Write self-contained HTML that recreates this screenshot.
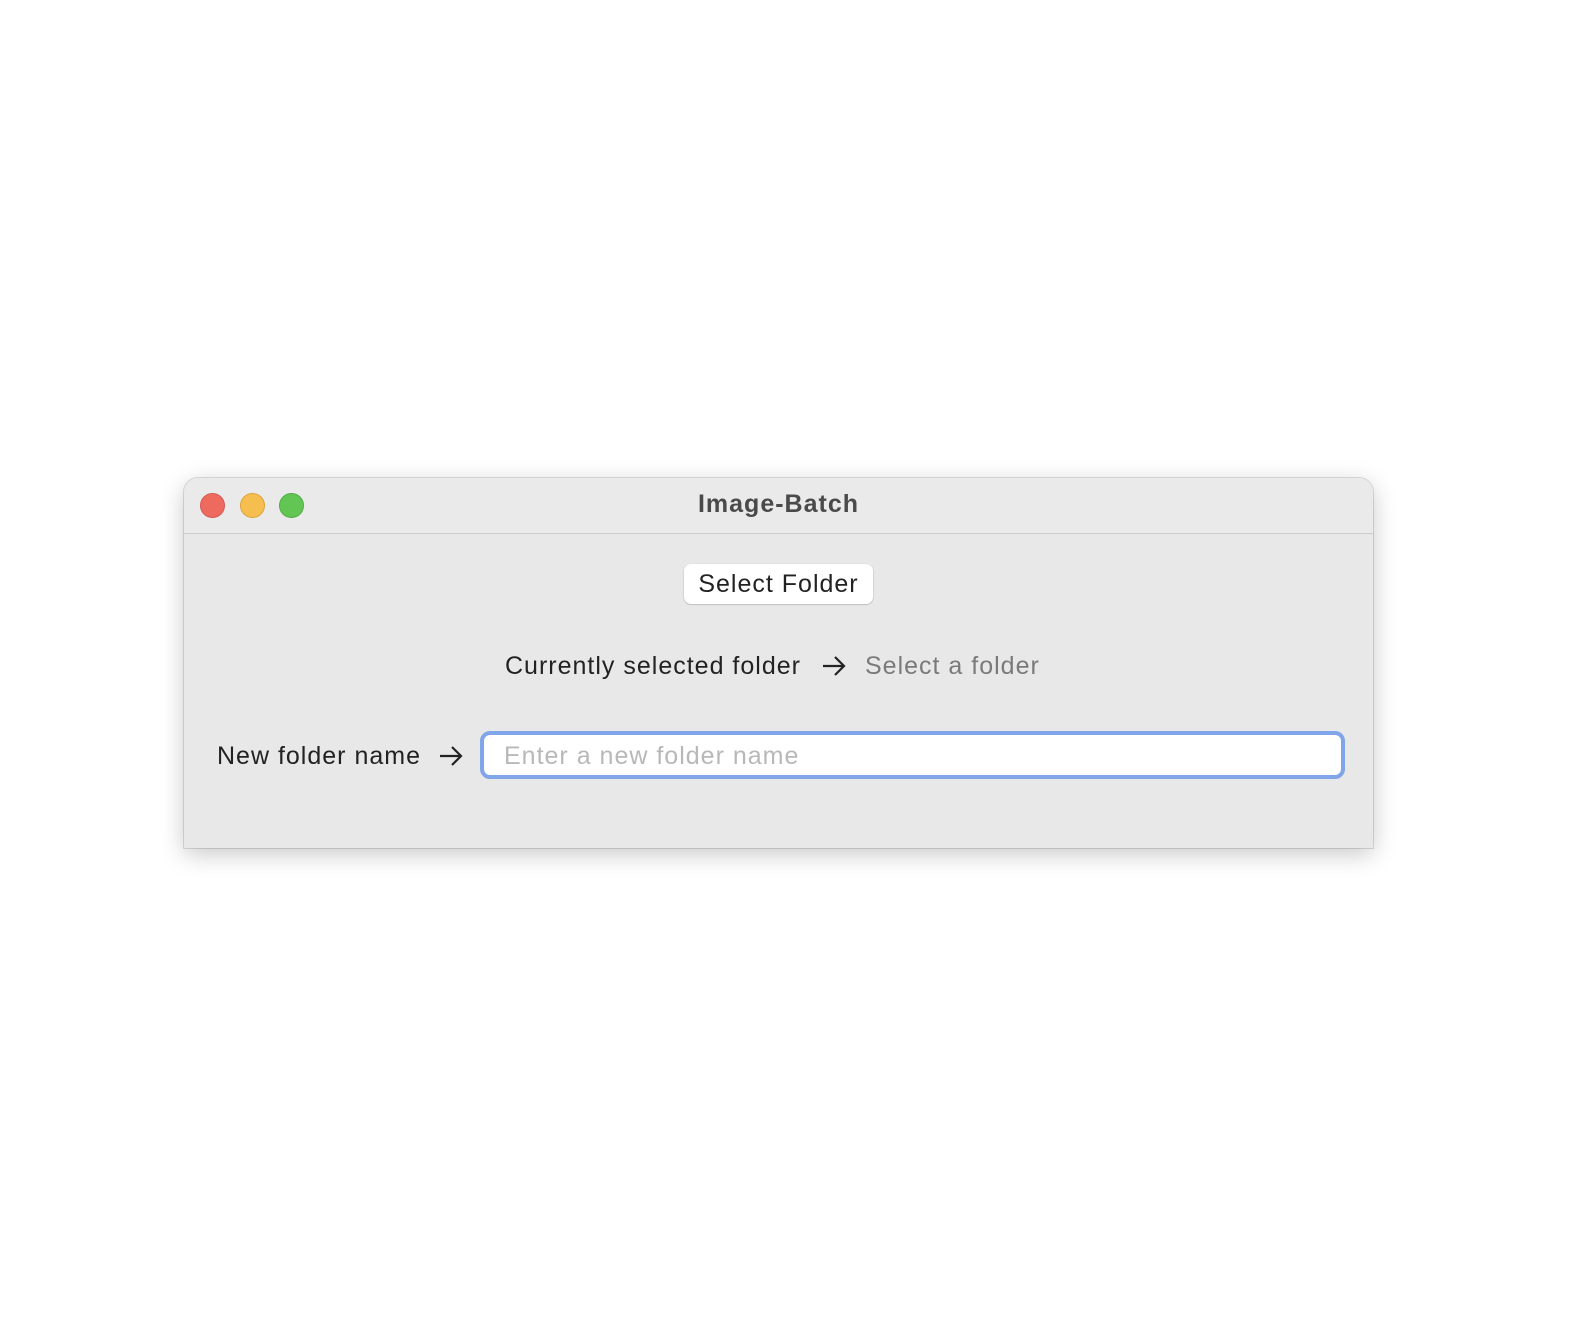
<!DOCTYPE html>
<html><head><meta charset="utf-8"><style>
html,body{margin:0;padding:0;background:#fff;width:1582px;height:1331px;overflow:hidden;font-family:"Liberation Sans",sans-serif;}
.win{position:absolute;left:184px;top:478px;width:1189px;height:370px;background:#e8e8e8;border-radius:14px 14px 0 0;box-shadow:0 0 0 1px rgba(0,0,0,0.12),0 6px 24px rgba(0,0,0,0.22);overflow:hidden;}
.tb{position:absolute;left:0;top:0;width:100%;height:55px;background:#eaeaea;border-bottom:1px solid #cdcdcd;}
.dot{position:absolute;top:15px;width:23px;height:23px;border-radius:50%;}
.t{position:absolute;white-space:nowrap;font-size:25px;letter-spacing:1px;color:#222;line-height:28px;}
.arrow{position:absolute;}
</style></head><body>
<div class="win">
 <div class="tb">
  <div class="dot" style="left:16px;background:#ee6a5f;border:0.5px solid #d45a50"></div>
  <div class="dot" style="left:56px;background:#f6be4f;border:0.5px solid #dca43d"></div>
  <div class="dot" style="left:95px;background:#62c554;border:0.5px solid #50ad45"></div>
  <div class="t" style="left:0;width:1189px;text-align:center;top:12px;font-weight:bold;color:#4a4a4a;">Image-Batch</div>
 </div>
 <div style="position:absolute;left:500px;top:86px;width:189px;height:40px;background:#fff;border-radius:7px;box-shadow:0 0.5px 1.5px rgba(0,0,0,0.3);"></div>
 <div class="t" style="left:500px;width:189px;text-align:center;top:92px;">Select Folder</div>
 <div class="t" style="left:321px;top:174px;">Currently selected folder</div>
 <svg class="arrow" style="left:637px;top:177px" width="26" height="22" viewBox="0 0 26 22"><path d="M2 11H23M14 2L23 11L14 20" stroke="#222" stroke-width="2.2" fill="none"/></svg>
 <div class="t" style="left:681px;top:174px;color:#7a7a7a;">Select a folder</div>
 <div class="t" style="left:33px;top:264px;">New folder name</div>
 <svg class="arrow" style="left:254px;top:267px" width="26" height="22" viewBox="0 0 26 22"><path d="M2 11H23M14 2L23 11L14 20" stroke="#222" stroke-width="2.2" fill="none"/></svg>
 <div style="position:absolute;left:296px;top:253px;width:857px;height:40px;background:#fff;border:4px solid #80a6e9;border-radius:10px;"></div>
 <div class="t" style="left:320px;top:264px;color:#b8b8b8;">Enter a new folder name</div>
</div>
</body></html>
